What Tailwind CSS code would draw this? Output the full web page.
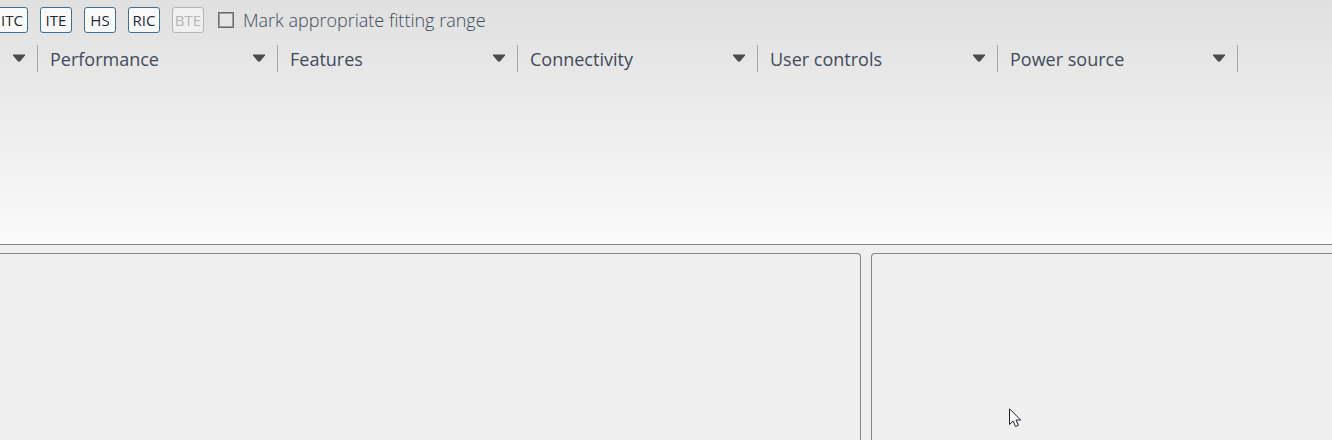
<!DOCTYPE html>
<html lang="en">
<head>
<meta charset="utf-8">
<meta name="viewport" content="width=device-width, initial-scale=1">
<title>Hearing instrument selection</title>
<script src="https://cdn.jsdelivr.net/npm/@tailwindcss/browser@4"></script>
</head>
<body class="flex h-screen flex-col overflow-hidden bg-[#efefef] font-['Segoe_UI','Open_Sans',sans-serif] text-[#414b5c]">
<header class="flex min-h-[245px] shrink-0 flex-col border-b border-[#7f838c] bg-linear-to-b from-[#e0e0e0] to-[#fafafa] pt-[7px]">
  <div class="flex h-[26px] items-center">
    <div class="-ml-1 flex gap-3 text-[15px] text-[#1f2937]">
      <button type="button" class="h-[26px] w-8 rounded-[3px] border border-[#3f7190] bg-[#fafafa]">ITC</button>
      <button type="button" class="h-[26px] w-8 rounded-[3px] border border-[#3f7190] bg-[#fafafa]">ITE</button>
      <button type="button" class="h-[26px] w-8 rounded-[3px] border border-[#3f7190] bg-[#fafafa]">HS</button>
      <button type="button" class="h-[26px] w-8 rounded-[3px] border border-[#3f7190] bg-[#fafafa]">RIC</button>
      <button type="button" disabled class="h-[26px] w-8 rounded-[3px] border border-[#b3b5b7] bg-[#f0f0f0] text-[#b3b5b7]">BTE</button>
    </div>
    <label class="ml-3.5 flex items-center gap-[9px] text-lg font-light whitespace-nowrap">
      <input type="checkbox" class="size-4 appearance-none border border-[#686868] bg-[#e6e6e6] inset-ring inset-ring-[#a0a0a0] checked:bg-[#686868]">
      Mark appropriate fitting range
    </label>
  </div>
  <div class="mt-3 flex h-[27px] text-lg">
    <div class="relative w-[38px] shrink-0 border-r border-[#a6a6a6]">
      <select aria-label="Style" class="size-full appearance-none bg-transparent"><option></option></select>
      <svg class="pointer-events-none absolute top-[9px] right-3 h-2 w-3" viewBox="0 0 12 8" fill="#4b4b4b"><path d="M0 .5h12v1L7 7.5H5L0 1.500z"/></svg>
    </div>
    <div class="relative w-60 shrink-0 border-r border-[#a6a6a6]">
      <select aria-label="Performance" class="size-full appearance-none bg-transparent pl-3"><option>Performance</option></select>
      <svg class="pointer-events-none absolute top-[9px] right-3 h-2 w-3" viewBox="0 0 12 8" fill="#4b4b4b"><path d="M0 .5h12v1L7 7.5H5L0 1.500z"/></svg>
    </div>
    <div class="relative w-60 shrink-0 border-r border-[#a6a6a6]">
      <select aria-label="Features" class="size-full appearance-none bg-transparent pl-3"><option>Features</option></select>
      <svg class="pointer-events-none absolute top-[9px] right-3 h-2 w-3" viewBox="0 0 12 8" fill="#4b4b4b"><path d="M0 .5h12v1L7 7.5H5L0 1.500z"/></svg>
    </div>
    <div class="relative w-60 shrink-0 border-r border-[#a6a6a6]">
      <select aria-label="Connectivity" class="size-full appearance-none bg-transparent pl-3"><option>Connectivity</option></select>
      <svg class="pointer-events-none absolute top-[9px] right-3 h-2 w-3" viewBox="0 0 12 8" fill="#4b4b4b"><path d="M0 .5h12v1L7 7.5H5L0 1.500z"/></svg>
    </div>
    <div class="relative w-60 shrink-0 border-r border-[#a6a6a6]">
      <select aria-label="User controls" class="size-full appearance-none bg-transparent pl-3"><option>User controls</option></select>
      <svg class="pointer-events-none absolute top-[9px] right-3 h-2 w-3" viewBox="0 0 12 8" fill="#4b4b4b"><path d="M0 .5h12v1L7 7.5H5L0 1.500z"/></svg>
    </div>
    <div class="relative w-60 shrink-0 border-r border-[#a6a6a6]">
      <select aria-label="Power source" class="size-full appearance-none bg-transparent pl-3"><option>Power source</option></select>
      <svg class="pointer-events-none absolute top-[9px] right-3 h-2 w-3" viewBox="0 0 12 8" fill="#4b4b4b"><path d="M0 .5h12v1L7 7.5H5L0 1.500z"/></svg>
    </div>
  </div>
</header>
<main class="flex flex-1 gap-2.5 pt-2">
  <section class="flex-1 rounded-tr-[4px] border-t border-r border-[#858585]"></section>
  <section class="w-[461px] rounded-tl-[4px] border-t border-l border-[#858585]"></section>
</main>
<!-- Mouse pointer -->
<svg class="pointer-events-none absolute top-[408px] left-[1009px] h-5 w-3" viewBox="0 0 12 20" fill="#fff" stroke="#20202c"><path d="M.5.8v15.700l3.600-3.500 2.500 5.500 2.800-1.200-2.400-5.300h4.600z"/></svg>
</body>
</html>
